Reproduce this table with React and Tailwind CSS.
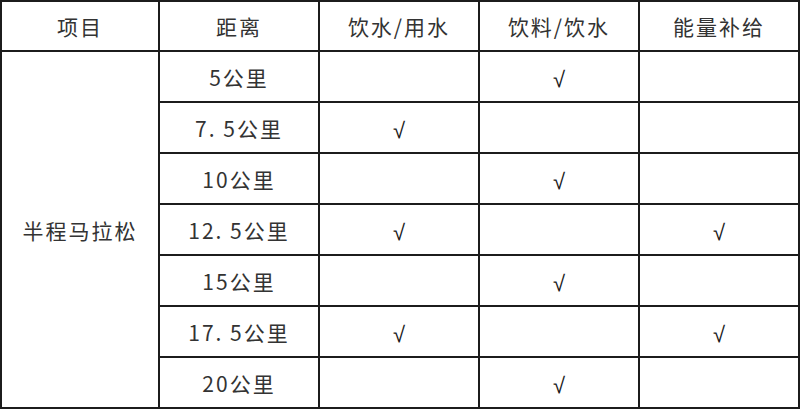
import React from "react";

const rows = [
  { dist: "5公里", water: false, drink: true, energy: false },
  { dist: "7. 5公里", water: true, drink: false, energy: false },
  { dist: "10公里", water: false, drink: true, energy: false },
  { dist: "12. 5公里", water: true, drink: false, energy: true },
  { dist: "15公里", water: false, drink: true, energy: false },
  { dist: "17. 5公里", water: true, drink: false, energy: true },
  { dist: "20公里", water: false, drink: true, energy: false },
];

const Check = ({ on }) =>
  on ? (
    <span
      className="text-[22px] text-[#1a1a1a] tracking-normal mt-[3px]"
      style={{ fontFamily: '"Liberation Sans", Arial, sans-serif' }}
    >
      √
    </span>
  ) : null;

const cell =
  "flex items-center justify-center border-r-2 border-b-2 border-[#1c1c1c] pt-[2px]";

const App = () => {
  return (
    <div
      className="w-[800px] h-[409px] bg-white text-[#333] text-[21px] tracking-[2px]"
      style={{ fontFamily: '"Noto Sans CJK SC", "Noto Sans", sans-serif' }}
    >
      <div className="grid grid-cols-[158px_160px_160px_160px_160px] grid-rows-[50px_51px_51px_51px_51px_51px_51px_51px] border-l-2 border-t-2 border-[#1c1c1c]">
        <div className={cell}>项目</div>
        <div className={cell}>距离</div>
        <div className={cell}>饮水/用水</div>
        <div className={cell}>饮料/饮水</div>
        <div className={cell}>能量补给</div>
        <div className={`${cell} row-span-7`}>半程马拉松</div>
        {rows.map((r) => (
          <React.Fragment key={r.dist}>
            <div className={cell}>{r.dist}</div>
            <div className={cell}>
              <Check on={r.water} />
            </div>
            <div className={cell}>
              <Check on={r.drink} />
            </div>
            <div className={cell}>
              <Check on={r.energy} />
            </div>
          </React.Fragment>
        ))}
      </div>
    </div>
  );
};

export default App;
